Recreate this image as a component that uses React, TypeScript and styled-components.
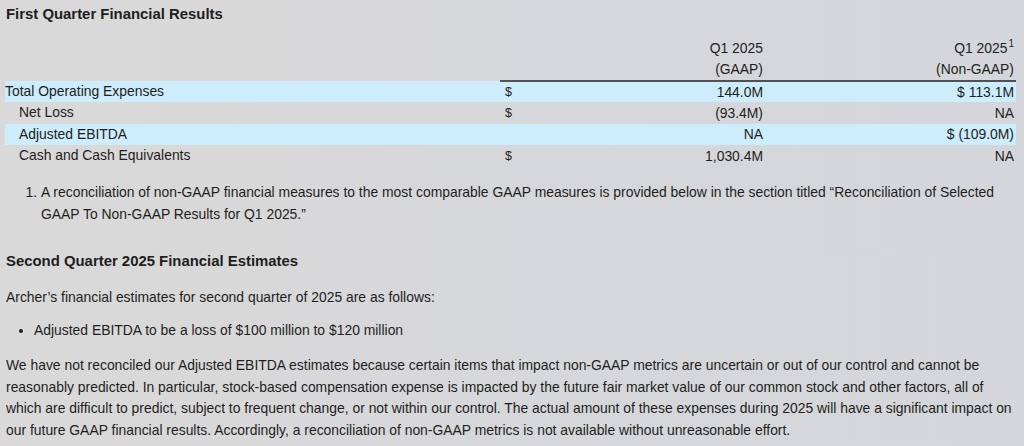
import React from "react";
import styled, { createGlobalStyle } from "styled-components";

const Global = createGlobalStyle`
  html, body { margin: 0; padding: 0; }
  body {
    background: linear-gradient(90deg, #dad9d9 0%, #d6d7da 55%, #d4d6db 100%);
    font-family: "Liberation Sans", Arial, sans-serif;
    color: #1e1e20;
    width: 1024px;
    height: 446px;
    overflow: hidden;
  }
`;

const Page = styled.div`
  padding: 5px 8px 0 5px;
  font-size: 13.9px;
`;

const Heading = styled.h3<{ $top?: number }>`
  margin: ${(p) => p.$top ?? 0}px 0 0 1px;
  font-size: 14.9px;
  font-weight: 700;
  line-height: 18px;
`;

const Table = styled.table`
  margin-top: 15px;
  border-collapse: collapse;
  table-layout: fixed;
  width: 1011px;
`;

const HeadCell = styled.th<{ $rule?: boolean }>`
  font-weight: 400;
  text-align: right;
  height: 21px;
  padding: 0 2px 0 0;
  line-height: 21px;
  border-bottom: ${(p) => (p.$rule ? "2px solid #4f5155" : "none")};
`;

const Row = styled.tr<{ $hl?: boolean }>`
  background: ${(p) => (p.$hl ? "#cdedfc" : "transparent")};
`;

const Label = styled.td<{ $indent?: boolean }>`
  padding: 0 0 0 ${(p) => (p.$indent ? 14 : 0)}px;
  height: 21.3px;
  line-height: 21.3px;
  white-space: nowrap;
`;

const Dollar = styled.td`
  padding: 0 0 0 5px;
  font-size: 12.5px;
`;

const Value = styled.td`
  text-align: right;
  padding: 0 2px 0 0;
  white-space: nowrap;
`;

const Sup = styled.sup`
  font-size: 10px;
  line-height: 0;
  vertical-align: 6px;
  margin-left: 1px;
`;

const Notes = styled.ol`
  margin: 16px 0 0 0;
  padding: 0 10px 0 36px;
  line-height: 21.5px;
`;

const Para = styled.p<{ $top?: number }>`
  margin: ${(p) => p.$top ?? 0}px 4px 0 1px;
  line-height: 21.5px;
`;

const Bullets = styled.ul`
  margin: 11px 0 0 0;
  padding: 0 0 0 29px;
  line-height: 21.5px;
`;

const rows = [
  { label: "Total Operating Expenses", indent: false, hl: true, d: "$", gaap: "144.0M", non: "$ 113.1M" },
  { label: "Net Loss", indent: true, hl: false, d: "$", gaap: "(93.4M)", non: "NA" },
  { label: "Adjusted EBITDA", indent: true, hl: true, d: "", gaap: "NA", non: "$ (109.0M)" },
  { label: "Cash and Cash Equivalents", indent: true, hl: false, d: "$", gaap: "1,030.4M", non: "NA" },
];

export default function App() {
  return (
    <>
      <Global />
      <Page>
        <Heading>First Quarter Financial Results</Heading>
        <Table>
          <colgroup>
            <col style={{ width: 495 }} />
            <col style={{ width: 130 }} />
            <col style={{ width: 135 }} />
            <col style={{ width: 251 }} />
          </colgroup>
          <thead>
            <tr>
              <HeadCell />
              <HeadCell />
              <HeadCell>Q1 2025</HeadCell>
              <HeadCell>
                Q1 2025<Sup>1</Sup>
              </HeadCell>
            </tr>
            <tr>
              <HeadCell />
              <HeadCell $rule />
              <HeadCell $rule>(GAAP)</HeadCell>
              <HeadCell $rule>(Non-GAAP)</HeadCell>
            </tr>
          </thead>
          <tbody>
            {rows.map((r) => (
              <Row key={r.label} $hl={r.hl}>
                <Label $indent={r.indent}>{r.label}</Label>
                <Dollar>{r.d}</Dollar>
                <Value>{r.gaap}</Value>
                <Value>{r.non}</Value>
              </Row>
            ))}
          </tbody>
        </Table>
        <Notes>
          <li>
            A reconciliation of non-GAAP financial measures to the most comparable GAAP measures is provided below in
            the section titled “Reconciliation of Selected GAAP To Non-GAAP Results for Q1 2025.”
          </li>
        </Notes>
        <Heading $top={27}>Second Quarter 2025 Financial Estimates</Heading>
        <Para $top={17}>Archer’s financial estimates for second quarter of 2025 are as follows:</Para>
        <Bullets>
          <li>Adjusted EBITDA to be a loss of $100 million to $120 million</li>
        </Bullets>
        <Para $top={14}>
          We have not reconciled our Adjusted EBITDA estimates because certain items that impact non-GAAP metrics are
          uncertain or out of our control and cannot be reasonably predicted. In particular, stock-based compensation
          expense is impacted by the future fair market value of our common stock and other factors, all of which are
          difficult to predict, subject to frequent change, or not within our control. The actual amount of these
          expenses during 2025 will have a significant impact on our future GAAP financial results. Accordingly, a
          reconciliation of non-GAAP metrics is not available without unreasonable effort.
        </Para>
      </Page>
    </>
  );
}
